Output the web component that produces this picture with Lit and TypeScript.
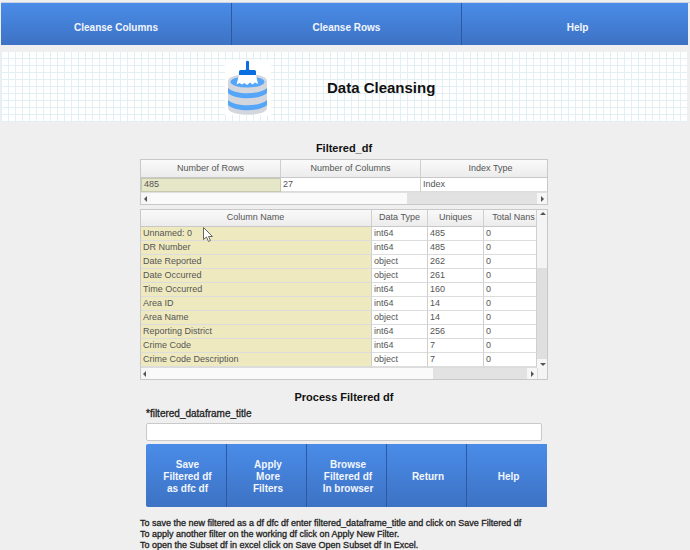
import { LitElement, css, html, svg } from 'lit'
import { customElement } from 'lit/decorators.js'

const columns = [
  ['Unnamed: 0', 'int64', '485', '0'],
  ['DR Number', 'int64', '485', '0'],
  ['Date Reported', 'object', '262', '0'],
  ['Date Occurred', 'object', '261', '0'],
  ['Time Occurred', 'int64', '160', '0'],
  ['Area ID', 'int64', '14', '0'],
  ['Area Name', 'object', '14', '0'],
  ['Reporting District', 'int64', '256', '0'],
  ['Crime Code', 'int64', '7', '0'],
  ['Crime Code Description', 'object', '7', '0'],
]

const brushIcon = svg`
  <svg class="icon" width="46" height="55" viewBox="0 0 46 55" aria-hidden="true">
    <rect width="46" height="55" fill="#fff" />
    <path d="M3 21 C3 12 42 12 42 21 V48 C42 57 3 57 3 48 Z" fill="#d3d7dd" />
    <path d="M3 28 C10 35 35 35 42 28 V33 C35 40 10 40 3 33 Z" fill="#55a5f8" />
    <path d="M3 40 C10 47 35 47 42 40 V45 C35 52 10 52 3 45 Z" fill="#55a5f8" />
    <ellipse cx="22.500" cy="22" rx="17" ry="5.500" fill="#55a5f8" />
    <path d="M14 15 H31 L33 24 L30 22.500 L27.500 24.500 L25 22.500 L22 25 L19.500 23 L17 24.500 L14.500 23 L11.500 24.500 Z" fill="#fff" />
    <path d="M21 1.500 Q22.500 0 24 1.500 V9 Q24 10 25 10 H29.500 Q31 10 31 11.500 V15 H14 V11.500 Q14 10 15.500 10 H20 Q21 10 21 9 Z" fill="#0a6fe0" />
  </svg>
`

@customElement('app-root')
export class AppRoot extends LitElement {
  render() {
    return html`
      <nav class="menu">
        <button>Cleanse Columns</button>
        <button>Cleanse Rows</button>
        <button class="menu-help">Help</button>
      </nav>

      <header class="banner">
        ${brushIcon}
        <h1>Data Cleansing</h1>
      </header>

      <section class="panel">
        <h2 class="filtered-title">Filtered_df</h2>

        <div class="table summary">
          <div class="cell head">Number of Rows</div>
          <div class="cell head">Number of Columns</div>
          <div class="cell head index-head">Index Type</div>
          <div class="cell picked">485</div>
          <div class="cell">27</div>
          <div class="cell">Index</div>
        </div>
        <div class="hbar summary-bar">
          <span class="arrow">${this.arrow('left')}</span>
          <span class="track"><span class="thumb"></span></span>
          <span class="arrow">${this.arrow('right')}</span>
        </div>

        <div class="grid-wrap">
          <div class="table details">
            <div class="cell head">Column Name</div>
            <div class="cell head">Data Type</div>
            <div class="cell head">Uniques</div>
            <div class="cell head nans">Total Nans</div>
            ${columns.map(
              (row) => html`
                <div class="cell picked">${row[0]}</div>
                <div class="cell">${row[1]}</div>
                <div class="cell">${row[2]}</div>
                <div class="cell">${row[3]}</div>
              `,
            )}
            <div class="cell picked stub"></div>
            <div class="cell stub"></div>
            <div class="cell stub"></div>
            <div class="cell stub"></div>
          </div>
          <div class="vbar">
            <span class="arrow">${this.arrow('up')}</span>
            <span class="vtrack"><span class="vthumb"></span></span>
            <span class="arrow">${this.arrow('down')}</span>
          </div>
          <div class="hbar details-bar">
            <span class="arrow">${this.arrow('left')}</span>
            <span class="track"><span class="thumb"></span></span>
            <span class="arrow">${this.arrow('right')}</span>
          </div>
          <div class="corner"></div>
          <svg class="cursor" width="11" height="16" viewBox="0 0 11 16" aria-hidden="true">
            <path d="M0.500 0.500 V12.500 L3.500 10 L5.500 14.500 L7.500 13.500 L5.500 9.500 H9.500 Z" fill="#fff" stroke="#666" stroke-width="1" />
          </svg>
        </div>

        <h2 class="process-title">Process Filtered df</h2>
        <label class="field-label" for="title">*filtered_dataframe_title</label>
        <input id="title" class="field" type="text" />

        <div class="actions">
          <button>Save<br />Filtered df<br />as dfc df</button>
          <button>Apply<br />More<br />Filters</button>
          <button>Browse<br />Filtered df<br />In browser</button>
          <button>Return</button>
          <button>Help</button>
        </div>

        <div class="notes">
          <p>To save the new filtered as a df dfc df enter filtered_dataframe_title and click on Save Filtered df</p>
          <p>To apply another filter on the working df click on Apply New Filter.</p>
          <p>To open the Subset df in excel click on Save Open Subset df In Excel.</p>
        </div>
      </section>
    `
  }

  private arrow(dir: 'left' | 'right' | 'up' | 'down') {
    const points = {
      left: '5,1 5,7 2,4',
      right: '3,1 3,7 6,4',
      up: '1,5 7,5 4,2',
      down: '1,3 7,3 4,6',
    }
    return svg`<svg width="8" height="8" viewBox="0 0 8 8" aria-hidden="true"><polygon points=${points[dir]} fill="#555" /></svg>`
  }

  static styles = css`
    :host {
      display: block;
      width: 690px;
      height: 550px;
      overflow: hidden;
      background: #efefef;
      font-family: 'Liberation Sans', Arial, sans-serif;
      color: #111;
    }

    button {
      font-family: inherit;
      color: #f2f6fd;
      font-weight: 700;
      font-size: 10px;
      border: 0;
      background: linear-gradient(#4a8ce8, #3d72c4);
      padding: 0;
    }

    .menu {
      display: grid;
      grid-template-columns: 230px 230px 227px;
      height: 43px;
      margin: 2px 0 0 1px;
      border-top: 1px solid #c9d3e2;
      box-sizing: border-box;
    }

    .menu button {
      padding-top: 7px;
    }

    .menu .menu-help {
      padding-left: 5px;
    }

    .menu button + button,
    .actions button + button {
      border-left: 1px solid #2c5a9c;
    }

    .banner {
      display: flex;
      align-items: center;
      height: 70px;
      margin: 7px 3px 0 1px;
      padding-left: 224px;
      box-sizing: border-box;
      background-color: #fff;
      background-image:
        repeating-linear-gradient(90deg, #e2f0f4 0 1px, transparent 1px 7px),
        repeating-linear-gradient(0deg, #e2f0f4 0 1px, transparent 1px 7px);
    }

    .icon {
      flex: none;
    }

    h1 {
      margin: 0 0 0 56px;
      font-size: 15px;
      line-height: 17px;
      font-weight: 700;
    }

    .panel {
      display: flex;
      flex-direction: column;
      width: 408px;
      margin-left: 140px;
    }

    h2 {
      margin: 0;
      text-align: center;
      font-size: 11px;
      line-height: 14px;
      font-weight: 700;
    }

    .filtered-title {
      margin-top: 19px;
      margin-bottom: 4px;
    }

    .table {
      display: grid;
      background: #fff;
      font-size: 9px;
      color: #555;
    }

    .summary {
      grid-template-columns: 140px 140px 126px;
      border: 1px solid #c8c8c8;
      border-bottom: 0;
      box-sizing: border-box;
      width: 408px;
    }

    .summary .cell:nth-child(3n) {
      border-right: 0;
    }

    .cell {
      height: 14px;
      line-height: 12px;
      padding-left: 2px;
      box-sizing: border-box;
      border-right: 1px solid #cfcfcf;
      border-bottom: 1px solid #dcdcdc;
      white-space: nowrap;
      overflow: hidden;
    }

    .head {
      height: 18px;
      line-height: 16px;
      padding: 0;
      text-align: center;
      background: linear-gradient(#fafafa, #ececec);
      border-bottom: 1px solid #c8c8c8;
    }

    .nans {
      padding-left: 7px;
    }

    .index-head {
      padding-left: 13px;
    }

    .picked {
      padding-left: 3px;
      background: #efe9c0;
    }

    .summary .picked {
      background: #e6e6c8;
      border: 1px solid #c6c8b0;
      line-height: 11px;
      padding-left: 2px;
    }

    .hbar {
      display: flex;
      height: 12px;
      box-sizing: border-box;
      background: #f4f4f4;
    }

    .summary-bar {
      width: 408px;
      border: 1px solid #c8c8c8;
      border-top: 1px solid #e0e0e0;
      height: 13px;
    }

    .arrow {
      display: flex;
      flex: none;
      width: 10px;
      align-items: center;
      justify-content: center;
      background: #f6f6f6;
    }

    .track {
      flex: 1;
      background: #fafafa;
      display: flex;
      justify-content: flex-end;
    }

    .thumb {
      display: block;
      background: #e2e2e2;
    }

    .summary-bar .thumb {
      width: 130px;
    }

    .details-bar .thumb {
      width: 94px;
    }

    .grid-wrap {
      position: relative;
      display: grid;
      grid-template-columns: 397px 11px;
      grid-template-rows: 159px 12px;
      width: 408px;
      height: 171px;
      margin-top: 4px;
      box-sizing: border-box;
      outline: 1px solid #c8c8c8;
      outline-offset: -1px;
      overflow: hidden;
    }

    .details {
      grid-template-columns: 232px 56px 56px 53px;
      grid-auto-rows: min-content;
      height: 159px;
      overflow: hidden;
    }

    .stub {
      height: 1px;
    }

    .vbar {
      display: flex;
      flex-direction: column;
      background: #f4f4f4;
    }

    .vbar .arrow {
      width: 11px;
      height: 9px;
    }

    .vtrack {
      flex: 1;
      display: flex;
      flex-direction: column;
      justify-content: flex-end;
    }

    .vthumb {
      display: block;
      height: 91px;
      background: #dfdfdf;
    }

    .corner {
      background: #f4f4f4;
      border-left: 1px solid #dcdcdc;
    }

    .cursor {
      position: absolute;
      left: 63px;
      top: 18px;
    }

    .process-title {
      margin-top: 10px;
      margin-bottom: 4px;
    }

    .field-label {
      margin-left: 6px;
      font-size: 10px;
      line-height: 12px;
      color: #222;
      -webkit-text-stroke: 0.3px #222;
    }

    .field {
      width: 396px;
      height: 18px;
      margin: 3px 0 3px 6px;
      padding: 0;
      box-sizing: border-box;
      background: #fff;
      border: 1px solid #c9c9c9;
      border-radius: 2px;
    }

    .actions {
      display: grid;
      grid-template-columns: repeat(4, 80px) 81px;
      height: 63px;
      margin-left: 6px;
    }

    .actions button {
      padding: 3px 0 0 3px;
      line-height: 12px;
    }

    .actions button:first-child {
      border-radius: 2px 0 0 2px;
    }

    .notes {
      margin-top: 10px;
      padding-top: 1px;
      font-size: 9px;
      line-height: 10.800px;
      color: #222;
      white-space: nowrap;
      -webkit-text-stroke: 0.3px #222;
    }

    .notes p {
      margin: 0;
    }
  `
}
